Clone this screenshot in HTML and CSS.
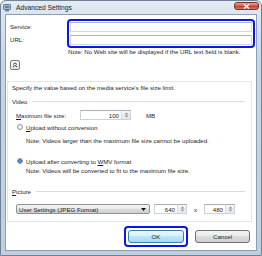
FILE: index.html
```html
<html>
    <head>
        <link rel="stylesheet" href="styles.css">
    </head>
    <body>
        <div class="window">
            <div class="titlebar">
                <svg class="appicon" width="8" height="8" viewBox="0 0 8 8">
                    <rect x="0.5" y="0.5" width="7" height="5" rx="0.5" fill="#dfe6ee" stroke="#6b7a8a"/>
                    <rect x="1.5" y="1.5" width="5" height="3" fill="#4f86c6"/>
                    <rect x="2" y="6" width="4" height="1.5" fill="#7b8794"/>
                </svg>
                <span class="title">Advanced Settings</span>
                <div class="close">
                    <svg width="7" height="5" viewBox="0 0 7 5">
                        <path d="M1 0.5 L6 4.5 M6 0.5 L1 4.5" stroke="#fff" stroke-width="1.4"/>
                    </svg>
                </div>
            </div>
            <div class="client">
                <div class="fields">
                    <div class="labels">
                        <span>Service:</span>
                        <span>URL:</span>
                    </div>
                    <div class="mark fieldmark">
                        <div class="textbox"></div>
                        <div class="textbox"></div>
                    </div>
                </div>
                <p class="urlnote">Note: No Web site will be displayed if the URL text field is blank.</p>
                <div class="less">
                    <svg width="6" height="6" viewBox="0 0 6 6">
                        <path d="M1 2.5 L3 0.8 L5 2.5 M1 5 L3 3.3 L5 5" fill="none" stroke="#333" stroke-width="0.9"/>
                    </svg>
                </div>
                <div class="panel">
                    <p class="line">Specify the value based on the media service's file size limit.</p>
                    <div class="group"><span>Video</span><i class="rule"></i></div>
                    <div class="sizerow">
                        <span class="sizelabel"><u>M</u>aximum file size:</span>
                        <div class="spin sizespin">
                            <span class="value">100</span>
                            <span class="arrows"><svg width="5" height="6" viewBox="0 0 5 6"><path d="M0.5 2.5 L2.5 0.5 L4.5 2.5 Z M0.5 3.5 L2.5 5.5 L4.5 3.5 Z" fill="#8a949e"/></svg></span>
                        </div>
                        <span class="unit">MB</span>
                    </div>
                    <div class="radiorow first"><span class="radio"></span><span><u>U</u>pload without conversion</span></div>
                    <p class="subnote first">Note: Videos larger than the maximum file size cannot be uploaded.</p>
                    <div class="radiorow second"><span class="radio on"></span><span>Upload after converting to <u>W</u>MV format</span></div>
                    <p class="subnote second">Note: Videos will be converted to fit to the maximum file size.</p>
                    <div class="group picture"><span><u>P</u>icture</span><i class="rule"></i></div>
                    <div class="picrow">
                        <div class="combo">
                            <span>User Settings (JPEG Format)</span>
                            <svg width="5" height="3" viewBox="0 0 5 3"><path d="M0 0 L5 0 L2.5 3 Z" fill="#111"/></svg>
                        </div>
                        <div class="spin wspin">
                            <span class="value">640</span>
                            <span class="arrows"><svg width="5" height="6" viewBox="0 0 5 6"><path d="M0.5 2.5 L2.5 0.5 L4.5 2.5 Z M0.5 3.5 L2.5 5.5 L4.5 3.5 Z" fill="#8a949e"/></svg></span>
                        </div>
                        <span class="times">x</span>
                        <div class="spin hspin">
                            <span class="value">480</span>
                            <span class="arrows"><svg width="5" height="6" viewBox="0 0 5 6"><path d="M0.5 2.5 L2.5 0.5 L4.5 2.5 Z M0.5 3.5 L2.5 5.5 L4.5 3.5 Z" fill="#8a949e"/></svg></span>
                        </div>
                    </div>
                </div>
                <div class="actions">
                    <div class="mark okmark"><div class="btn ok">OK</div></div>
                    <div class="btn cancel">Cancel</div>
                </div>
            </div>
        </div>
    </body>
</html>
```
FILE: styles.css
```css
* {
    box-sizing: border-box;
}
body {
    margin: 0;
    width: 262px;
    height: 256px;
    overflow: hidden;
    background-color: white;
    font-family: "Liberation Sans", Arial, sans-serif;
    font-size: 6.1px;
    color: #1e1e1e;
}
p {
    margin: 0;
}
.window {
    width: 262px;
    height: 256px;
    display: flex;
    flex-direction: column;
    padding: 0 4px 4px 4px;
    border: 1px solid #6f8296;
    border-radius: 6px 6px 0 0;
    background: linear-gradient(#e3ebf3, #c6d5e4 60px, #bfcfdf);
}
.titlebar {
    height: 13px;
    display: flex;
    align-items: center;
    margin: 0 -4px;
    padding: 0 2px 0 2px;
}
.appicon {
    margin-right: 5px;
}
.title {
    flex: 1;
    font-size: 6.7px;
    color: #1a1a1a;
}
.close {
    align-self: flex-start;
    margin-top: 1px;
    width: 25px;
    height: 8px;
    display: flex;
    align-items: center;
    justify-content: center;
    border: 1px solid #7a3328;
    border-radius: 3px;
    background: linear-gradient(#e9a897, #d0604d 45%, #c2412d 55%, #d47b68);
}
.client {
    flex: 1;
    display: flex;
    flex-direction: column;
    background-color: white;
    border: 1px solid #8e9eb0;
}
.fields {
    display: flex;
    margin-top: 4px;
}
.labels {
    width: 61px;
    padding: 3px 0 0 4px;
    display: flex;
    flex-direction: column;
    gap: 3px;
}
.labels span {
    height: 10px;
    line-height: 10px;
}
.mark {
    border: 2px solid #0b17e8;
    border-radius: 4px;
    padding: 2px;
}
.fieldmark {
    width: 188px;
    padding: 1px;
    display: flex;
    flex-direction: column;
    gap: 3px;
}
.textbox {
    height: 10px;
    border: 1px solid #d3d9e0;
    border-top-color: #aeb5be;
    background-color: white;
}
.urlnote {
    margin-left: 62px;
    height: 8px;
    line-height: 8px;
    white-space: nowrap;
}
.less {
    margin: 4px 0 0 4px;
    width: 10px;
    height: 10px;
    display: flex;
    align-items: center;
    justify-content: center;
    border: 1px solid #7c7c7c;
    border-radius: 2px;
    background: linear-gradient(#f6f6f6, #e2e2e2);
}
.panel {
    margin: 11px 4px 0 1px;
    padding: 2px 6px 7px 4px;
    border: 1px solid #e1e6eb;
}
.line, .subnote {
    height: 8px;
    line-height: 8px;
    white-space: nowrap;
}
.group {
    display: flex;
    align-items: center;
    height: 8px;
    margin-top: 5px;
}
.group.picture {
    margin-top: 12px;
}
.rule {
    flex: 1;
    height: 1px;
    margin-left: 5px;
    background-color: #d5dce3;
}
.sizerow {
    display: flex;
    align-items: center;
    height: 10px;
    margin: 5px 0 0 4px;
}
.sizelabel {
    width: 64px;
}
.spin {
    height: 10px;
    display: flex;
    align-items: center;
    border: 1px solid #cbd2da;
    border-top-color: #a9b1ba;
    background-color: white;
}
.spin .value {
    flex: 1;
    text-align: right;
    padding-right: 2px;
}
.spin .arrows {
    width: 9px;
    height: 8px;
    display: flex;
    align-items: center;
    justify-content: center;
    border-left: 1px solid #d4dae0;
    background: linear-gradient(#f4f6f8, #e3e8ec);
}
.sizespin {
    width: 51px;
}
.unit {
    margin-left: 15px;
}
.radiorow {
    display: flex;
    align-items: center;
    height: 8px;
    margin-left: 5px;
}
.radiorow.first {
    margin-top: 3px;
}
.radiorow.second {
    margin-top: 12px;
}
.radio {
    width: 6px;
    height: 6px;
    margin-right: 3px;
    border: 1px solid #8c959f;
    border-radius: 50%;
    background: radial-gradient(#ffffff, #dfe3e7);
}
.radio.on {
    background: radial-gradient(#7fc0f5 0, #1f67c9 55%, #dfe7ef 70%);
}
.subnote {
    margin-left: 14px;
}
.subnote.first {
    margin-top: 6px;
}
.subnote.second {
    margin-top: 2px;
}
.picrow {
    display: flex;
    align-items: center;
    height: 10px;
    margin: 9px 0 0 4px;
}
.combo {
    width: 134px;
    height: 10px;
    margin-right: 4px;
    display: flex;
    align-items: center;
    justify-content: space-between;
    padding: 0 3px 0 2px;
    border: 1px solid #8f9295;
    border-radius: 2px;
    background: linear-gradient(#f4f4f4, #e9e9e9 50%, #dadada 50%, #d0d0d0);
}
.wspin {
    width: 33px;
}
.times {
    width: 17px;
    text-align: center;
}
.hspin {
    width: 31px;
}
.actions {
    flex: 1;
    display: flex;
    align-items: center;
    justify-content: flex-end;
    gap: 7px;
    padding-right: 6px;
}
.btn {
    height: 13px;
    display: flex;
    align-items: center;
    justify-content: center;
    border: 1px solid #707070;
    border-radius: 3px;
    background: linear-gradient(#f3f3f3, #ebebeb 50%, #dddddd 50%, #cfcfcf);
}
.ok {
    width: 56px;
    border-color: #3c7fb1;
    background: linear-gradient(#eaf6fd, #d9f0fc 50%, #bee6fd 50%, #a7d9f5);
}
.cancel {
    width: 55px;
}
```
